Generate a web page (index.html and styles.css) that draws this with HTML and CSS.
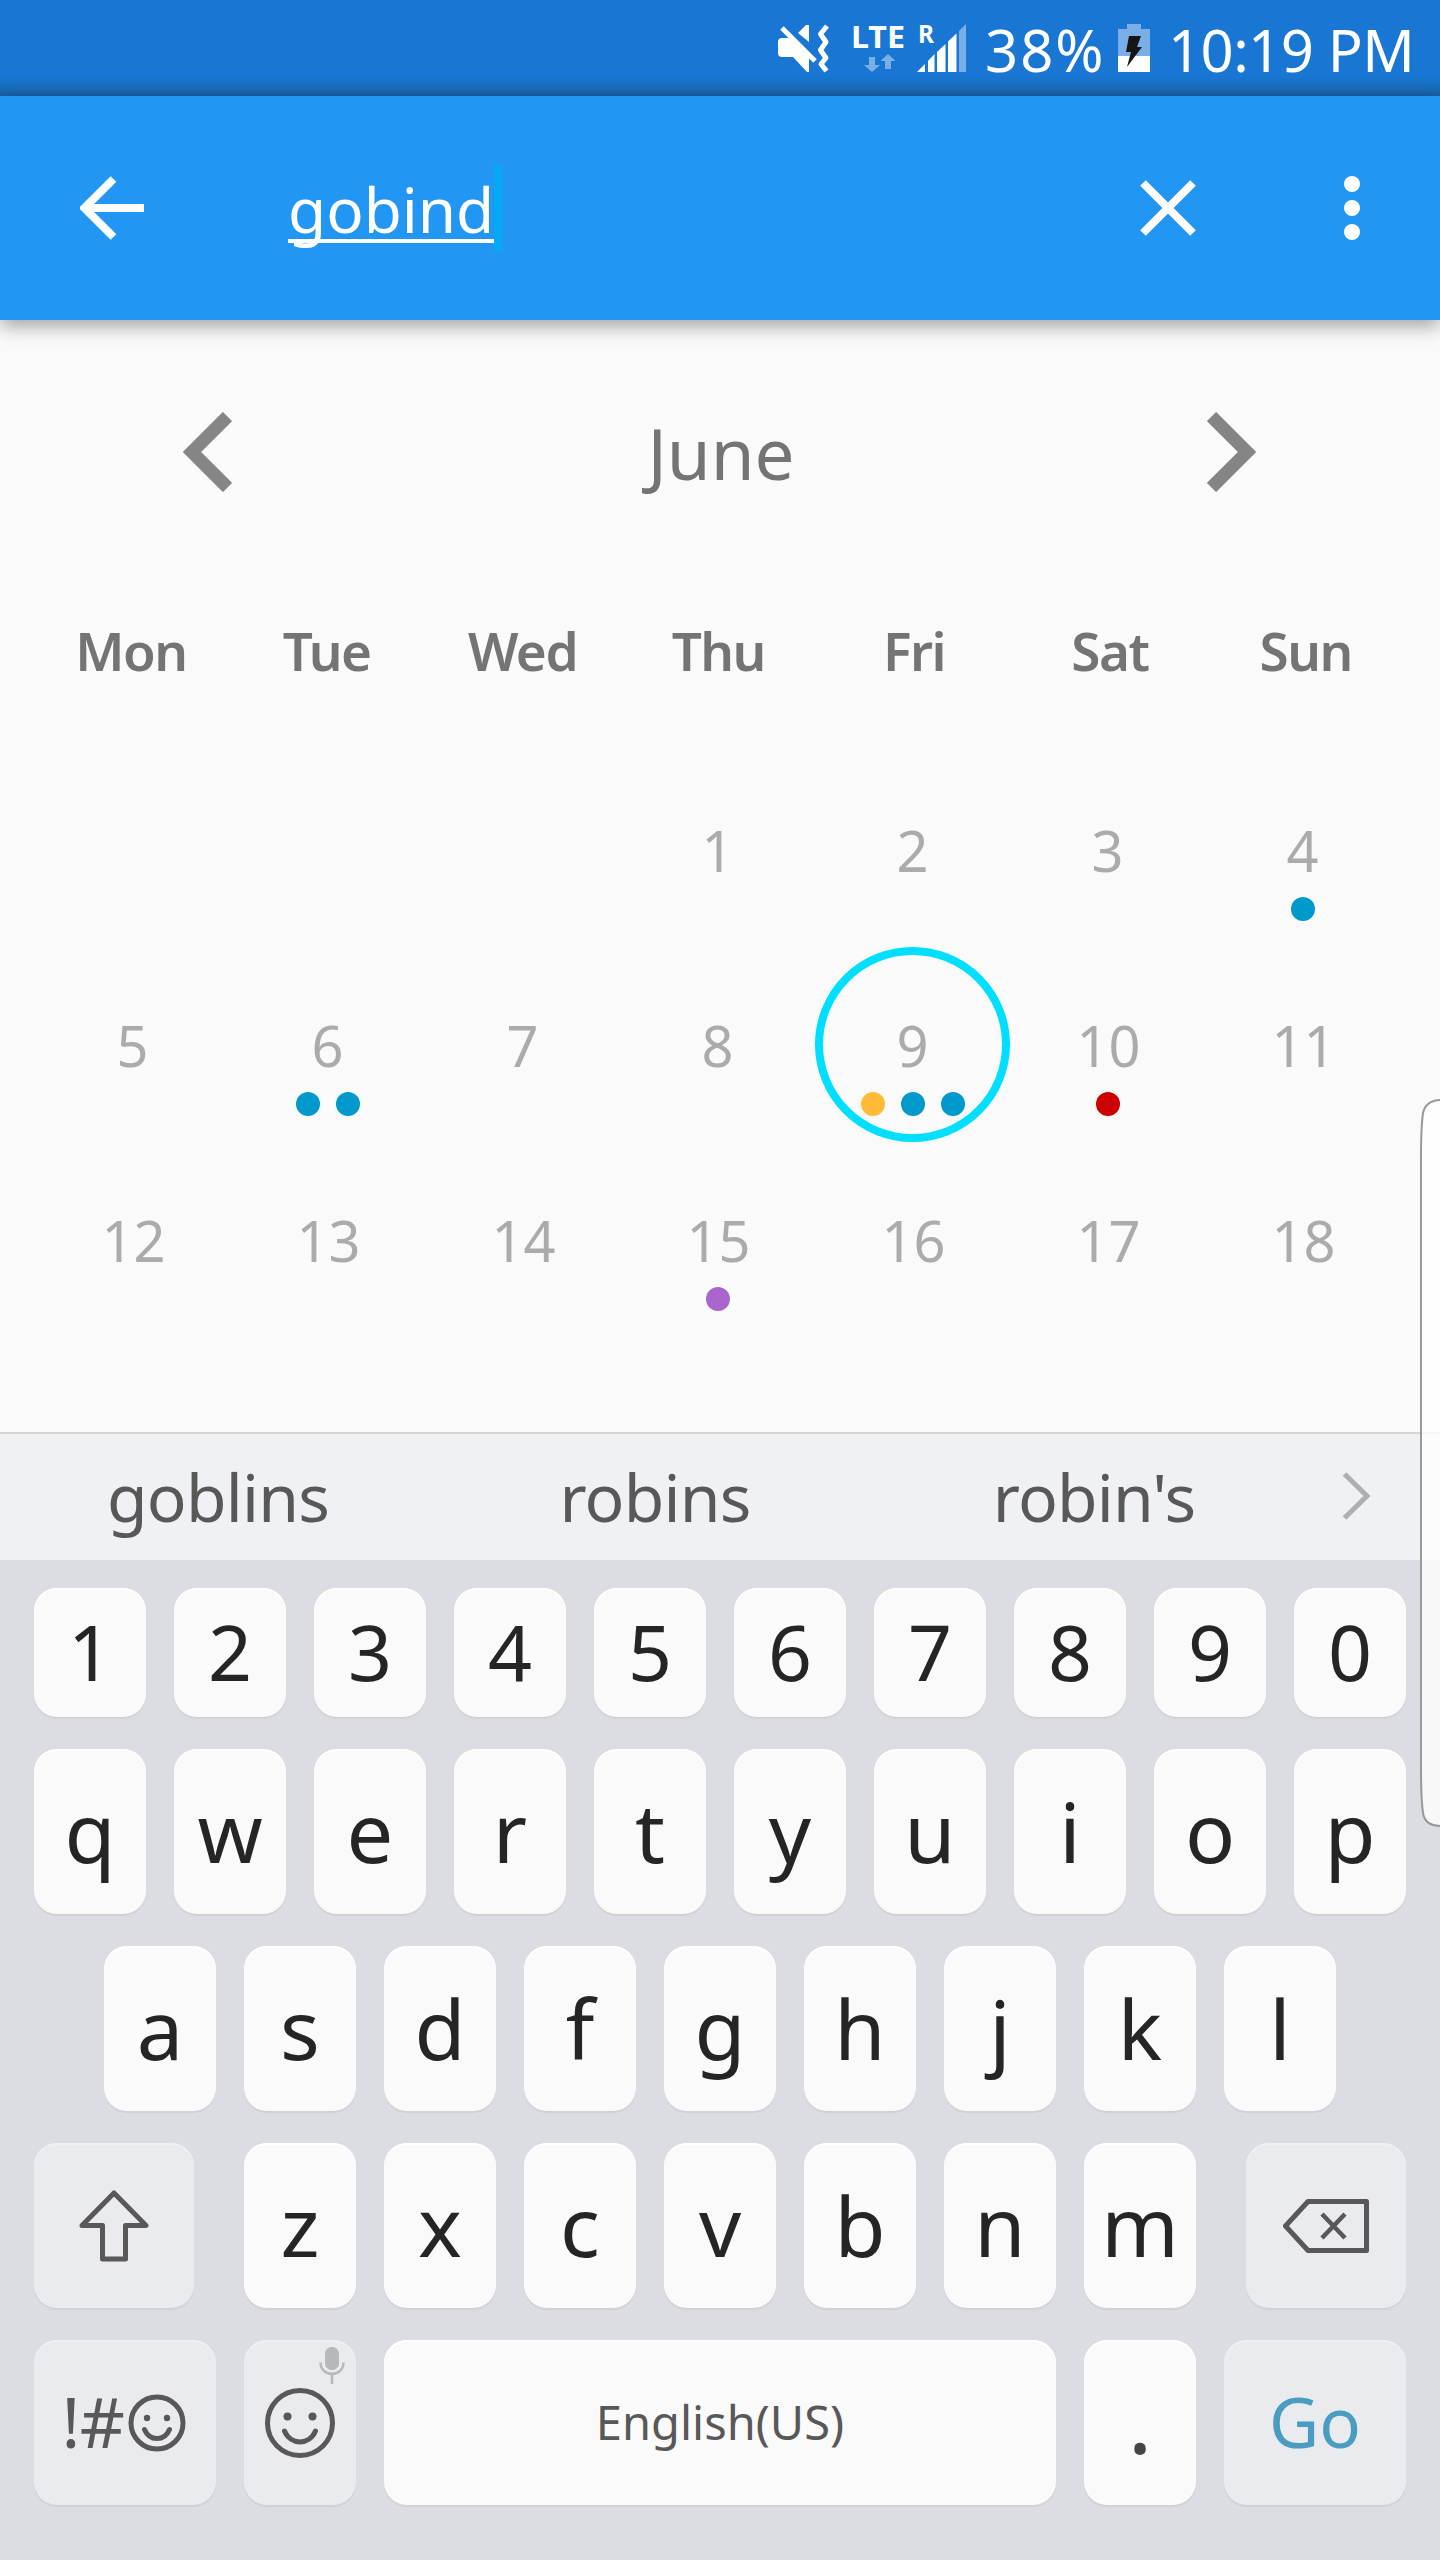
FILE: index.html
```html
<!DOCTYPE html>
<html lang="en">
<head>
<meta charset="utf-8">
<title>Calendar search</title>
<link rel="stylesheet" href="styles.css">
</head>
<body>
<div class="phone">
  <header class="status">
    <svg class="status-icons" viewBox="0 -14 190 66" width="190" height="66">
      <g fill="#fff">
        <path d="M0 18q0-4 4-4h7l20 20v14h-2L15 33H4q-4 0-4-4z"/>
        <path d="M28 1h3v17L20 9z"/>
        <path d="M4 4L37 37" stroke="#fff" stroke-width="5"/>
        <path d="M49 2L42.500 10 48 18l-5.500 8 5.500 8-5 6 5.500 7" fill="none" stroke="#fff" stroke-width="5" stroke-linejoin="round"/>
      </g>
      <g fill="#79afe6">
        <path d="M91 33h6v8h5l-8 7-8-7h5z"/>
        <path d="M107 45h6v-8h4.500l-7.500-7-7.500 7h4.500z"/>
        <path d="M181 7l7-7v48h-7z"/>
      </g>
      <path fill="#fff" d="M139 48l8-8v8zM150 37l6.500-7v18H150zM159 28l8.500-8v28H159zM170 17.500l8.500-8V48H170z"/>
      <text x="73" y="24" class="net lte" textLength="54" lengthAdjust="spacingAndGlyphs">LTE</text>
      <text x="140" y="19" class="net roam" textLength="16" lengthAdjust="spacingAndGlyphs">R</text>
    </svg>
    <span class="percent">38%</span>
    <svg class="battery" viewBox="0 0 32 48" width="32" height="48">
      <path fill="#79afe6" d="M9 0h14v5h9v27H0V5h9z"/>
      <path fill="#fff" d="M0 32h32v16H0z"/>
      <path fill="#151515" d="M11 12h12l-4 11h5L9 43l4-15H8z"/>
    </svg>
    <span class="clock">10:19 PM</span>
  </header>

  <div class="toolbar">
    <svg class="back" viewBox="0 0 64 64" width="64" height="64"><path d="M64 32H6M33.500 3L4.500 32l29 29" fill="none" stroke="#fff" stroke-width="8"/></svg>
    <div class="query"><span class="query-text">gobind</span><span class="caret"></span></div>
    <svg class="clear" viewBox="0 0 56 56" width="56" height="56"><path d="M3 3l50 50M53 3L3 53" stroke="#fff" stroke-width="8"/></svg>
    <svg class="more" viewBox="0 0 16 64" width="16" height="64"><g fill="#fff"><circle cx="8" cy="8" r="8"/><circle cx="8" cy="32" r="8"/><circle cx="8" cy="56" r="8"/></g></svg>
  </div>

  <main class="calendar">
    <div class="month">
      <svg viewBox="0 0 49 80" width="49" height="80"><path d="M44.500 4.500L9 40l35.500 35.500" fill="none" stroke="#858585" stroke-width="13"/></svg>
      <h1>June</h1>
      <svg viewBox="0 0 49 80" width="49" height="80"><path d="M4.500 4.500L40 40 4.500 75.500" fill="none" stroke="#858585" stroke-width="13"/></svg>
    </div>
    <div class="weekdays"><span>Mon</span><span>Tue</span><span>Wed</span><span>Thu</span><span>Fri</span><span>Sat</span><span>Sun</span></div>
    <div class="days">
      <div></div><div></div><div></div>
      <div class="day">1</div><div class="day">2</div><div class="day">3</div>
      <div class="day">4<p class="dots"><i class="blue"></i></p></div>
      <div class="day">5</div>
      <div class="day">6<p class="dots"><i class="blue"></i><i class="blue"></i></p></div>
      <div class="day">7</div><div class="day">8</div>
      <div class="day today">9<p class="dots"><i class="amber"></i><i class="blue"></i><i class="blue"></i></p></div>
      <div class="day two">10<p class="dots"><i class="red"></i></p></div>
      <div class="day two">11</div>
      <div class="day two">12</div><div class="day two">13</div><div class="day two">14</div>
      <div class="day two">15<p class="dots"><i class="purple"></i></p></div>
      <div class="day two">16</div><div class="day two">17</div><div class="day two">18</div>
    </div>
  </main>

  <div class="suggestions">
    <span>goblins</span><span>robins</span><span>robin's</span>
    <svg viewBox="0 0 28 48" width="28" height="48"><path d="M2.500 2L25 24 2.500 46" fill="none" stroke="#aeafb1" stroke-width="5"/></svg>
  </div>

  <div class="keyboard">
    <div class="row numbers"><b>1</b><b>2</b><b>3</b><b>4</b><b>5</b><b>6</b><b>7</b><b>8</b><b>9</b><b>0</b></div>
    <div class="row"><b>q</b><b>w</b><b>e</b><b>r</b><b>t</b><b>y</b><b>u</b><b>i</b><b>o</b><b>p</b></div>
    <div class="row"><b>a</b><b>s</b><b>d</b><b>f</b><b>g</b><b>h</b><b>j</b><b>k</b><b>l</b></div>
    <div class="row">
      <b class="fn shift"><svg viewBox="0 0 70 72" width="70" height="72"><path d="M35 3L67 35.500H46.500V69h-23V35.500H3z" fill="none" stroke="#585858" stroke-width="5" stroke-linejoin="round"/></svg></b>
      <b>z</b><b>x</b><b>c</b><b>v</b><b>b</b><b>n</b><b>m</b>
      <b class="fn del"><svg viewBox="0 0 86 54" width="86" height="54"><path d="M25 2.500H83.500v49H25L2.500 27z" fill="none" stroke="#585858" stroke-width="5" stroke-linejoin="round"/><path d="M39 15l23 24M62 15L39 39" stroke="#585858" stroke-width="4.500"/></svg></b>
    </div>
    <div class="row">
      <b class="fn symbols"><span>!#</span><svg viewBox="0 0 58 58" width="58" height="58"><g fill="none" stroke="#585858" stroke-width="5"><circle cx="29" cy="29" r="26"/><path d="M16.500 35.500c5 12 20 12 25 0" stroke-linecap="round"/></g><circle cx="19" cy="24" r="3.200" fill="#585858"/><circle cx="39" cy="24" r="3.200" fill="#585858"/></svg></b>
      <b class="fn emoji"><svg viewBox="0 0 72 72" width="72" height="72"><g fill="none" stroke="#585858" stroke-width="5"><circle cx="36" cy="36" r="32.500"/><path d="M20.500 44c6 14.500 25 14.500 31 0" stroke-linecap="round"/></g><circle cx="23.500" cy="29.500" r="4" fill="#585858"/><circle cx="48.500" cy="29.500" r="4" fill="#585858"/></svg>
        <svg class="mic" viewBox="0 0 26 37" width="26" height="37"><rect x="6" width="14" height="23" rx="6.500" fill="#b7b8ba"/><path d="M1.500 15.500c0 15 23 15 23 0M13 27v10" fill="none" stroke="#b7b8ba" stroke-width="2.500"/></svg></b>
      <b class="space">English(US)</b>
      <b class="period">.</b>
      <b class="fn go">Go</b>
    </div>
  </div>
  <svg class="edge" viewBox="0 0 22 728" width="22" height="728"><path d="M23 1Q8 1 5 14 3 28 3 60V668q0 32 2 46 2 13 18 13" fill="#fff" fill-opacity=".8" stroke="#999" stroke-width="2"/></svg>
</div>
</body>
</html>
```
FILE: styles.css
```css
* { box-sizing: border-box; }

body {
  margin: 0;
  background: #fafafa;
  font-family: "Noto Sans", "Open Sans", sans-serif;
}

.phone {
  position: relative;
  width: 1440px;
  height: 2560px;
  overflow: hidden;
  display: flex;
  flex-direction: column;
}

svg { display: block; flex: none; }

/* status bar */
.status {
  height: 96px;
  flex: none;
  display: flex;
  align-items: flex-start;
  padding: 24px 0 0 778px;
  color: #fff;
  font-size: 58px;
  line-height: 48px;
  white-space: nowrap;
  background: linear-gradient(#1976d2 76px, #196fc1 86px, #1860a8 96px);
}
.status-icons { margin: -14px 17px 0 0; }
.net { fill: #fff; font-weight: 700; }
.lte { font-size: 30px; }
.roam { font-size: 25px; }
.percent { width: 133px; letter-spacing: 2px; }
.battery { margin-right: 18px; }
.clock { letter-spacing: -.6px; }
.percent, .clock { padding-top: 2px; }

/* search toolbar */
.toolbar {
  position: relative;
  z-index: 1;
  height: 224px;
  flex: none;
  display: flex;
  align-items: center;
  padding: 0 80px;
  background: #2196f3;
  box-shadow: 0 6px 18px rgba(0, 0, 0, .36);
}
.query {
  flex: 1;
  display: flex;
  align-items: center;
  margin-left: 144px;
  color: #fff;
  font-size: 62px;
}
.query-text {
  line-height: 60px;
  height: 64px;
  margin-top: 5px;
  border-bottom: 4px solid #fff;
}
.caret { width: 8px; height: 87px; background: #03a9f4; }
.clear { margin-right: 148px; }

/* calendar */
.calendar { height: 1112px; flex: none; }
.month {
  display: flex;
  align-items: center;
  justify-content: space-between;
  padding: 92px 184px 0 183px;
  height: 172px;
  color: #747474;
}
.month h1 { margin: 2px 0 0 3px; font-size: 71px; font-weight: 400; line-height: 80px; }
.weekdays {
  display: grid;
  grid-template-columns: repeat(7, 195.800px);
  padding: 123px 0 0 33px;
  height: 260px;
  color: #747474;
  font-size: 53px;
  font-weight: 600;
  letter-spacing: -1.5px;
  line-height: 72px;
  text-align: center;
}
.days {
  display: grid;
  grid-template-columns: repeat(7, 195px);
  grid-auto-rows: 195px;
  padding-left: 35px;
}
.day {
  padding-top: 64px;
  color: #ababab;
  font-size: 56px;
  line-height: 68px;
  text-align: center;
}
.two { text-indent: 2px; }
.dots {
  display: flex;
  justify-content: center;
  gap: 16px;
  margin: 13px 0 0;
}
.dots i { width: 24px; height: 24px; border-radius: 50%; }
.today {
  border: 8px solid #00dfff;
  border-radius: 50%;
  padding-top: 56px;
}
.blue { background: #0099cc; }
.amber { background: #ffbb33; }
.red { background: #cc0000; }
.purple { background: #aa66cc; }

/* suggestions */
.suggestions {
  height: 128px;
  flex: none;
  display: grid;
  grid-template-columns: 436px 438px 440px 1fr;
  align-items: center;
  border-top: 2px solid #d4d6d8;
  background: #eff1f4;
  color: #585858;
  font-size: 66px;
  letter-spacing: -.8px;
  line-height: 90px;
  text-align: center;
}
.suggestions span { padding-bottom: 2px; }
.suggestions svg { margin: -2px 0 0 28px; }

/* keyboard */
.keyboard {
  flex: 1;
  display: flex;
  flex-direction: column;
  gap: 32px;
  padding-top: 28px;
  background: #dcdde2;
}
.row {
  height: 165px;
  flex: none;
  display: flex;
  justify-content: center;
  gap: 28px;
  color: #252525;
  font-size: 83px;
}
.row b {
  position: relative;
  width: 112px;
  display: flex;
  align-items: center;
  justify-content: center;
  padding-bottom: 3px;
  font-weight: 400;
  line-height: 1;
  border-radius: 23px;
  background: #fafafa;
  box-shadow: 0 2px 1px #d0d1d6, inset 0 2px 1px #fff;
}
.numbers { height: 129px; font-size: 77px; }
.row .fn {
  background: #e9ebef;
  box-shadow: 0 2px 1px #d0d1d6, inset 0 2px 1px #f0f1f3;
  color: #585858;
}
.row .shift, .row .del { width: 160px; padding-bottom: 0; }
.row .shift { margin-right: 22px; }
.row .del { margin-left: 22px; }
.row .symbols { width: 182px; padding-bottom: 0; gap: 3px; font-size: 70px; letter-spacing: -.5px; }
.symbols span { margin: -4px 0 0 -3px; }
.row .emoji { padding-bottom: 0; }
.row .space { width: 672px; padding-bottom: 1px; font-size: 47px; color: #585858; }
.row .period { font-weight: 500; color: #454545; }
.row .go { width: 182px; font-size: 69px; color: #4a9dc0; }
.mic { position: absolute; right: 11px; top: 7px; }

/* edge panel handle */
.edge { position: absolute; right: 0; top: 1099px; }
```
